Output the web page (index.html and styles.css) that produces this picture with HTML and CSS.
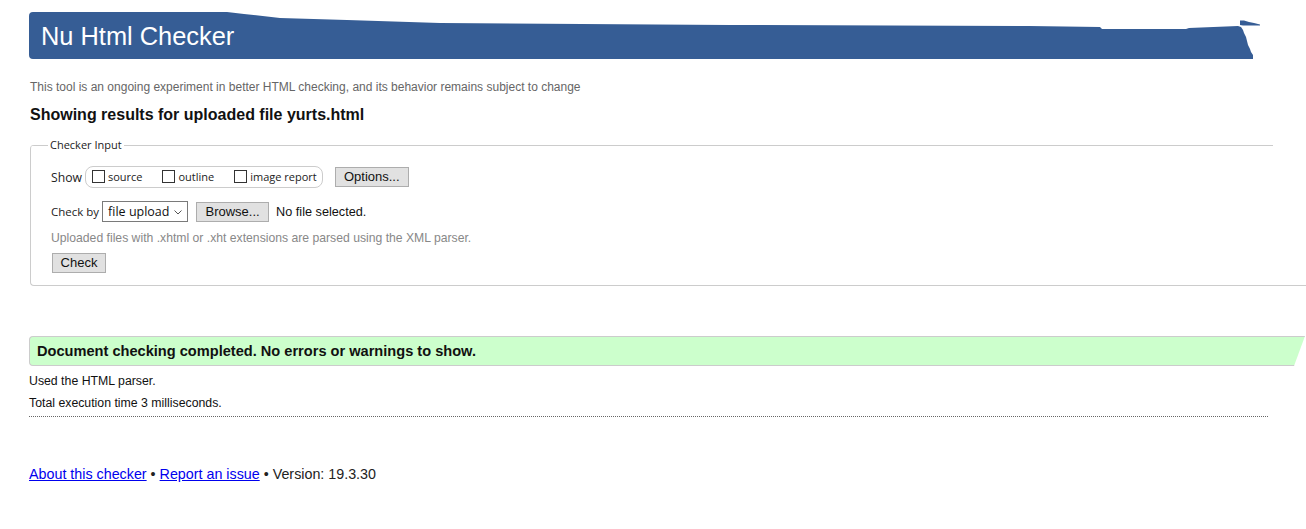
FILE: index.html
```html
<!DOCTYPE html>
<html lang="en">
<head>
<meta charset="utf-8">
<title>Showing results for yurts.html - Nu Html Checker</title>
<link rel="stylesheet" href="styles.css">
</head>
<body>
<div class="page">
  <header class="masthead">
    <svg class="masthead-bg" viewBox="0 0 1231 48" width="1231" height="48" aria-hidden="true">
      <path fill="#365d95" d="M0 5 Q0 1 4 1 L198 1 L215 3 L251 7 L318 9 L411 12 L700 14 L1000 15 L1071 16 L1073 18 L1157 18 L1160 17 L1209 15 L1212 16 L1214 19 L1215 22 L1217 26 L1218 30 L1219 34 L1221 38 L1222 41 L1224 44 L1224 48 L4 48 Q0 48 0 44 Z"/>
      <path fill="#365d95" d="M1211 9.5 L1215 9.5 L1220 11 L1225 12 L1231 13.5 L1231 14.5 L1214 14.5 L1211 14 Z"/>
    </svg>
    <h1 class="title">Nu Html Checker</h1>
  </header>
  <p class="tagline">This tool is an ongoing experiment in better HTML checking, and its behavior remains subject to change</p>
  <h2 class="results-heading">Showing results for uploaded file yurts.html</h2>

  <section class="input-box">
    <span class="legend">Checker Input</span>
    <div class="row show-row">
      <span class="label label-show">Show</span>
      <span class="pill">
        <label class="opt"><span class="box"></span>source</label>
        <label class="opt"><span class="box"></span>outline</label>
        <label class="opt"><span class="box"></span>image report</label>
      </span>
      <button class="btn btn-options" type="button">Options...</button>
    </div>
    <div class="row check-row">
      <span class="label">Check by</span>
      <span class="select">file upload
        <svg class="chev" width="8" height="5" viewBox="0 0 8 5" aria-hidden="true"><path d="M0.5 0.5 L4 4 L7.5 0.5" fill="none" stroke="#555" stroke-width="1"/></svg>
      </span>
      <button class="btn btn-browse" type="button">Browse...</button>
      <span class="nofile">No file selected.</span>
    </div>
    <p class="hint">Uploaded files with .xhtml or .xht extensions are parsed using the XML parser.</p>
    <button class="btn btn-check" type="button">Check</button>
  </section>

  <div class="success">Document checking completed. No errors or warnings to show.</div>
  <div class="details">
    <p class="detail-line">Used the HTML parser.</p>
    <p class="detail-line">Total execution time 3 milliseconds.</p>
  </div>

  <footer class="footer">
    <a href="#">About this checker</a> • <a href="#">Report an issue</a> • Version: 19.3.30
  </footer>
</div>
</body>
</html>
```

FILE: styles.css
```css
html, body {
  margin: 0;
  padding: 0;
  background: #fff;
  overflow: hidden;
}

body {
  font-family: "Liberation Sans", Arial, sans-serif;
  color: #111;
}

.page {
  padding-left: 29px;
}

.masthead {
  position: relative;
  margin-top: 11px;
  width: 1231px;
  height: 48px;
}

.masthead-bg {
  position: absolute;
  left: 0;
  top: 0;
  display: block;
}

.title {
  position: relative;
  margin: 0;
  padding: 2px 0 0 12px;
  font-size: 25.4px;
  font-weight: normal;
  line-height: 46px;
  color: #fff;
}

.tagline {
  margin: 21px 0 0 1px;
  font-size: 12px;
  line-height: 14px;
  color: #666;
}

.results-heading {
  margin: 11px 0 0 1px;
  font-size: 16px;
  line-height: 20px;
  font-weight: bold;
  color: #111;
}

.input-box {
  margin: 20px 0 0 1px;
  border-left: 1px solid #ccc;
  border-bottom: 1px solid #ccc;
  border-radius: 4px 0 0 4px;
  background: linear-gradient(#ccc, #ccc) 0 0 / calc(100% - 33px) 1px no-repeat;
  padding: 0 0 12px 20px;
  font-family: "Open Sans", "Noto Sans", sans-serif;
  font-size: 11px;
  color: #222;
}

.legend {
  display: inline-block;
  margin: -8px 0 0 -3px;
  padding: 0 2px;
  background: #fff;
  font-size: 11px;
  line-height: 16px;
  vertical-align: top;
}

.row {
  display: flex;
  align-items: center;
}

.show-row {
  margin-top: 6px;
  height: 22px;
}

.label {
  font-size: 11.5px;
  margin-right: 3px;
}

.label-show {
  font-size: 12.2px;
}

.pill {
  display: flex;
  align-items: center;
  height: 20px;
  border: 1px solid #ccc;
  border-radius: 8px;
  padding: 0 5px 0 6px;
}

.opt {
  display: flex;
  align-items: center;
  margin-right: 20px;
  font-size: 11px;
  line-height: 14px;
}

.opt:last-child {
  margin-right: 0;
}

.box {
  width: 11px;
  height: 11px;
  border: 1px solid #333;
  background: #fff;
  margin-right: 3px;
  position: relative;
  top: -1px;
}

.btn {
  font-family: "Liberation Sans", Arial, sans-serif;
  font-size: 13px;
  color: #111;
  background: #e1e1e1;
  border: 1px solid #adadad;
  border-radius: 0;
  padding: 0;
  margin: 0;
  height: 20px;
  line-height: 18px;
}

.btn-options {
  margin-left: 12px;
  width: 74px;
}

.check-row {
  margin-top: 13px;
  height: 21px;
}

.select {
  display: flex;
  align-items: center;
  box-sizing: border-box;
  width: 86px;
  height: 21px;
  border: 1px solid #7a7a7a;
  padding-left: 5px;
  font-size: 12.5px;
  color: #111;
  position: relative;
}

.chev {
  position: absolute;
  right: 5px;
  top: 8px;
}

.btn-browse {
  margin-left: 8px;
  width: 73px;
  height: 20px;
}

.nofile {
  margin-left: 7px;
  font-family: "Liberation Sans", Arial, sans-serif;
  font-size: 12.7px;
  color: #111;
}

.hint {
  margin: 8px 0 0 0;
  font-family: "Liberation Sans", Arial, sans-serif;
  font-size: 12.2px;
  line-height: 16px;
  color: #888;
}

.btn-check {
  display: block;
  margin: 7px 0 0 1px;
  width: 54px;
  height: 20px;
}

.success {
  box-sizing: border-box;
  margin-top: 50px;
  width: 1276px;
  height: 30px;
  background: #ccffcc;
  border: 1px solid #ccc;
  border-right: none;
  border-radius: 4px 0 0 4px;
  clip-path: polygon(0 0, 100% 0, calc(100% - 11px) 100%, 0 100%);
  padding-left: 7px;
  font-size: 14.6px;
  font-weight: bold;
  line-height: 28px;
  color: #111;
}

.details {
  margin-top: 4px;
  width: 1239px;
  border-bottom: 1px dotted #666;
  padding-bottom: 2px;
}

.detail-line {
  margin: 0;
  font-size: 12.3px;
  line-height: 22px;
  color: #111;
}

.footer {
  margin-top: 48px;
  font-size: 14.3px;
  line-height: 18px;
  color: #222;
}

.footer a {
  color: #0000ee;
  text-decoration: underline;
}
```
